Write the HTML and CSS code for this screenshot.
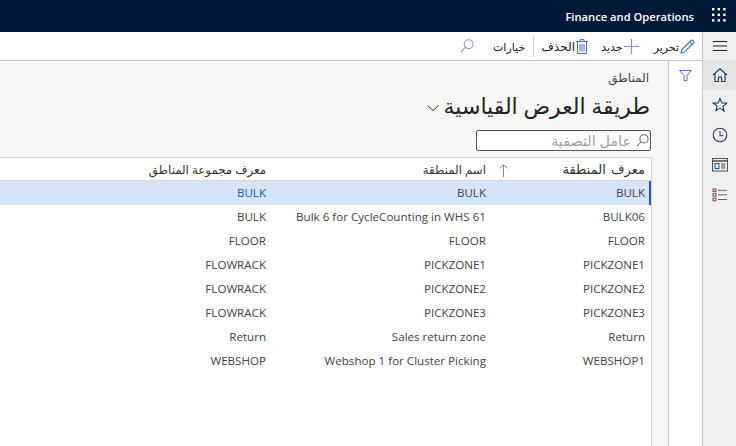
FILE: index.html
```html
<!DOCTYPE html>
<html lang="ar" dir="rtl">
<head>
    <meta charset="UTF-8">
    <title>المناطق</title>
    <link rel="stylesheet" href="styles.css">
</head>
<body>

    <header class="topbar">
        <button class="waffle" aria-label="Apps">
            <svg width="14" height="14" viewBox="0 0 14 14" fill="#fff">
                <rect x="0" y="0" width="2.4" height="2.4"/><rect x="5.6" y="0" width="2.4" height="2.4"/><rect x="11.2" y="0" width="2.4" height="2.4"/>
                <rect x="0" y="5.6" width="2.4" height="2.4"/><rect x="5.6" y="5.6" width="2.4" height="2.4"/><rect x="11.2" y="5.6" width="2.4" height="2.4"/>
                <rect x="0" y="11.2" width="2.4" height="2.4"/><rect x="5.6" y="11.2" width="2.4" height="2.4"/><rect x="11.2" y="11.2" width="2.4" height="2.4"/>
            </svg>
        </button>
        <span class="brand" dir="ltr">Finance and Operations</span>
    </header>

    <div class="shell">
        <!-- Nav rail -->
        <nav class="rail">
            <div class="rail-item rail-menu">
                <svg width="16" height="12" viewBox="0 0 16 12" stroke="#222" fill="none"><path d="M1 1.5h14M1 6h14M1 10.5h14"/></svg>
            </div>
            <div class="rail-item rail-active">
                <svg width="16" height="16" viewBox="0 0 16 16" fill="none" stroke="#1d3a5c" stroke-width="1.1"><path d="M1 8 8 1.8 15 8M3 6.5V14.5h3.5V10h3v4.5H13V6.5"/></svg>
            </div>
            <div class="rail-item">
                <svg width="16" height="16" viewBox="0 0 16 16" fill="none" stroke="#1d3a5c" stroke-width="1.1"><path d="M8 1.5l1.9 4.4 4.7.4-3.6 3.1 1.1 4.7L8 11.1l-4.1 2.5L5 8.9 1.4 6.3l4.7-.4z"/></svg>
            </div>
            <div class="rail-item">
                <svg width="16" height="16" viewBox="0 0 16 16" fill="none" stroke="#1d3a5c" stroke-width="1.1"><circle cx="8" cy="8" r="6.8"/><path d="M8 3.8V8.6h3.4" stroke="#6b4a4a"/></svg>
            </div>
            <div class="rail-item">
                <svg width="16" height="14" viewBox="0 0 16 14" fill="none" stroke="#555" stroke-width="1"><rect x=".5" y=".5" width="15" height="12.5"/><path d="M.5 3h15" stroke-width="1.6"/><rect x="3" y="5.5" width="4" height="5" stroke="#1d5a9c"/><path d="M9 6h4.5M9 8h4.5M9 10h4.5"/></svg>
            </div>
            <div class="rail-item">
                <svg width="16" height="14" viewBox="0 0 16 14" fill="none" stroke="#666" stroke-width="1"><rect x="1" y="1" width="3" height="2.6" stroke="#7a4a4a"/><rect x="1" y="5.6" width="3" height="2.6" stroke="#7a4a4a"/><rect x="1" y="10.2" width="3" height="2.6" stroke="#7a4a4a"/><path d="M6 2.3h9M6 6.9h9M6 11.5h9"/></svg>
            </div>
        </nav>

        <div class="main">
            <!-- Action bar -->
            <div class="toolbar">
                <span class="tool">
                    <svg class="tool-icon" width="15" height="15" viewBox="0 0 15 15" fill="none" stroke="#4a6fd8" stroke-width="1.1"><path d="M1 14l.9-3.4L11 1.5a1.4 1.4 0 0 1 2 0l.5.5a1.4 1.4 0 0 1 0 2L4.4 13.1z"/><path d="M9.8 2.8l2.4 2.4"/></svg>
                    تحرير
                </span>
                <span class="tool tool-new">
                    <svg class="tool-icon" width="15" height="15" viewBox="0 0 15 15" stroke="#7d93e0" stroke-width="1.2"><path d="M7.5 0v15M0 7.5h15"/></svg>
                    جديد
                </span>
                <span class="tool tool-delete">
                    <svg class="tool-icon" width="12" height="15" viewBox="0 0 12 15" fill="none" stroke="#4a6fd8" stroke-width="1"><path d="M0 2.5h12M4 2.5V.6h4v1.9M1.5 2.5v12h9v-12M4 5v7.5M6 5v7.5M8 5v7.5"/></svg>
                    الحذف
                </span>
                <span class="tool tool-options">خيارات</span>
                <svg class="tool-search" width="14" height="14" viewBox="0 0 14 14" fill="none" stroke="#9a8fe0" stroke-width="1.1"><circle cx="8.6" cy="5.2" r="4.4"/><path d="M5.4 8.4 1 13"/></svg>
            </div>

            <div class="body-row">
                <!-- Filter pane tab -->
                <aside class="filter-tab">
                    <svg width="13" height="11" viewBox="0 0 13 11" fill="none" stroke="#5a6ae0" stroke-width="1"><path d="M.5.5h12L8 5.5v5H5v-5z"/></svg>
                </aside>

                <section class="content">
                    <div class="crumb">المناطق</div>
                    <h1 class="page-title">طريقة العرض القياسية
                        <svg class="chevron" width="12" height="6" viewBox="0 0 12 6" fill="none" stroke="#333"><path d="M.5.5 6 5.5l5.5-5"/></svg>
                    </h1>
                    <div class="filter-box">
                        <svg width="13" height="13" viewBox="0 0 14 14" fill="none" stroke="#555" stroke-width="1"><circle cx="8.6" cy="5.2" r="4.4"/><path d="M5.4 8.4 1 13"/></svg>
                        <span class="filter-hint">عامل التصفية</span>
                    </div>

                    <div class="grid">
                        <div class="row head">
                            <div class="cell c-id">معرف المنطقة</div>
                            <div class="cell c-name">اسم المنطقة
                                <svg class="sort" width="9" height="13" viewBox="0 0 9 13" fill="none" stroke="#888"><path d="M4.5 13V1M.7 4.5 4.5.8l3.8 3.7"/></svg>
                            </div>
                            <div class="cell c-group">معرف مجموعة المناطق</div>
                        </div>
                        <div class="row selected">
                            <div class="cell c-id">BULK</div>
                            <div class="cell c-name">BULK</div>
                            <div class="cell c-group link">BULK</div>
                        </div>
                        <div class="row">
                            <div class="cell c-id">BULK06</div>
                            <div class="cell c-name">Bulk 6 for CycleCounting in WHS 61</div>
                            <div class="cell c-group">BULK</div>
                        </div>
                        <div class="row">
                            <div class="cell c-id">FLOOR</div>
                            <div class="cell c-name">FLOOR</div>
                            <div class="cell c-group">FLOOR</div>
                        </div>
                        <div class="row">
                            <div class="cell c-id">PICKZONE1</div>
                            <div class="cell c-name">PICKZONE1</div>
                            <div class="cell c-group">FLOWRACK</div>
                        </div>
                        <div class="row">
                            <div class="cell c-id">PICKZONE2</div>
                            <div class="cell c-name">PICKZONE2</div>
                            <div class="cell c-group">FLOWRACK</div>
                        </div>
                        <div class="row">
                            <div class="cell c-id">PICKZONE3</div>
                            <div class="cell c-name">PICKZONE3</div>
                            <div class="cell c-group">FLOWRACK</div>
                        </div>
                        <div class="row">
                            <div class="cell c-id">Return</div>
                            <div class="cell c-name">Sales return zone</div>
                            <div class="cell c-group">Return</div>
                        </div>
                        <div class="row">
                            <div class="cell c-id">WEBSHOP1</div>
                            <div class="cell c-name">Webshop 1 for Cluster Picking</div>
                            <div class="cell c-group">WEBSHOP</div>
                        </div>
                    </div>
                </section>
            </div>
        </div>
    </div>

</body>
</html>
```

FILE: styles.css
```css
/* General Reset */
* {
    margin: 0;
    padding: 0;
    box-sizing: border-box;
}

html, body {
    height: 446px;
    overflow: hidden;
}

body {
    font-family: 'Open Sans', 'DejaVu Sans', sans-serif;
    font-size: 11.6px;
    color: #333;
    background-color: #fff;
}

/* Top Bar */
.topbar {
    height: 32px;
    background-color: #00193a;
    display: flex;
    align-items: center;
}

.waffle {
    width: 35px;
    height: 32px;
    padding-bottom: 2px;
    background: none;
    border: none;
    display: flex;
    align-items: center;
    justify-content: center;
}

.brand {
    margin-right: 7px;
    color: #fff;
    font-weight: 600;
    font-size: 11.2px;
}

.shell {
    display: flex;
    height: 414px;
}

/* Nav Rail */
.rail {
    width: 34px;
    background-color: #f0f0f0;
    border-left: 1px solid #c8c6c4;
    flex: none;
}

.rail-item {
    height: 30px;
    display: flex;
    align-items: center;
    justify-content: center;
}

.rail-menu {
    height: 28px;
}

.rail-active {
    background-color: #e6e6e6;
}

/* Action Bar */
.main {
    flex: 1;
    min-width: 0;
    display: flex;
    flex-direction: column;
}

.toolbar {
    height: 29px;
    background-color: #fff;
    border-bottom: 1px solid #c8c6c4;
    display: flex;
    align-items: center;
    padding-right: 7px;
    flex: none;
    font-size: 11px;
}

.tool {
    display: flex;
    align-items: center;
    gap: 1px;
    color: #222;
    white-space: nowrap;
}

.tool-new {
    margin-right: 15px;
}

.tool-delete {
    margin-right: 13px;
    padding-left: 7px;
    border-left: 1px solid #d8d6d4;
    height: 22px;
    font-size: 12.2px;
}

.tool-options {
    margin-right: 8px;
}

.tool-search {
    margin-right: 19px;
}

.body-row {
    flex: 1;
    display: flex;
    min-height: 0;
}

.filter-tab {
    width: 34px;
    flex: none;
    background-color: #fff;
    border-left: 1px solid #c8c6c4;
    display: flex;
    justify-content: center;
    padding-top: 9px;
}

/* Content */
.content {
    flex: 1;
    min-width: 0;
    background-color: #f8f7f5;
    padding-right: 16px;
}

.crumb {
    margin-top: 8px;
    margin-right: 3px;
    height: 18px;
    line-height: 18px;
    font-size: 12px;
    color: #444;
}

.page-title {
    font-size: 22px;
    font-weight: 400;
    color: #222;
    height: 36px;
    line-height: 36px;
    margin-right: 2px;
    display: flex;
    align-items: center;
    gap: 5px;
}

.chevron {
    margin-top: 6px;
}

.filter-box {
    width: 175px;
    height: 21px;
    margin-top: 7px;
    margin-right: 1px;
    background-color: #fff;
    border: 1px solid #555;
    border-radius: 2px;
    display: flex;
    align-items: center;
    gap: 5px;
    padding-right: 1px;
}

.filter-hint {
    color: #a19f9d;
    font-size: 14.4px;
    line-height: 19px;
}

/* Grid */
.grid {
    margin-top: 6px;
    width: 652px;
    background-color: #fff;
    border-top: 1px solid #d8d6d4;
    border-right: 1px solid #d8d6d4;
    height: 289px;
}

.row {
    display: flex;
    height: 24px;
    align-items: center;
    padding-bottom: 2px;
}

.row.head {
    height: 23px;
    border-bottom: 1px solid #d8d6d4;
    padding-bottom: 0;
}

.row.selected {
    background-color: #d6e4fa;
    box-shadow: inset -2px 0 0 #1f5bc4;
}

.cell {
    padding-right: 6px;
    white-space: nowrap;
    display: flex;
    align-items: center;
    color: #444;
}

.head .cell {
    font-size: 11.8px;
    color: #333;
}

.head .c-id {
    font-size: 13px;
    word-spacing: 2px;
}

.c-id {
    width: 159px;
}

.c-name {
    width: 220px;
    position: relative;
}

.c-group {
    flex: 1;
}

.sort {
    position: absolute;
    right: -16px;
    top: 3px;
}

.link {
    color: #1f5bb4;
}
```
